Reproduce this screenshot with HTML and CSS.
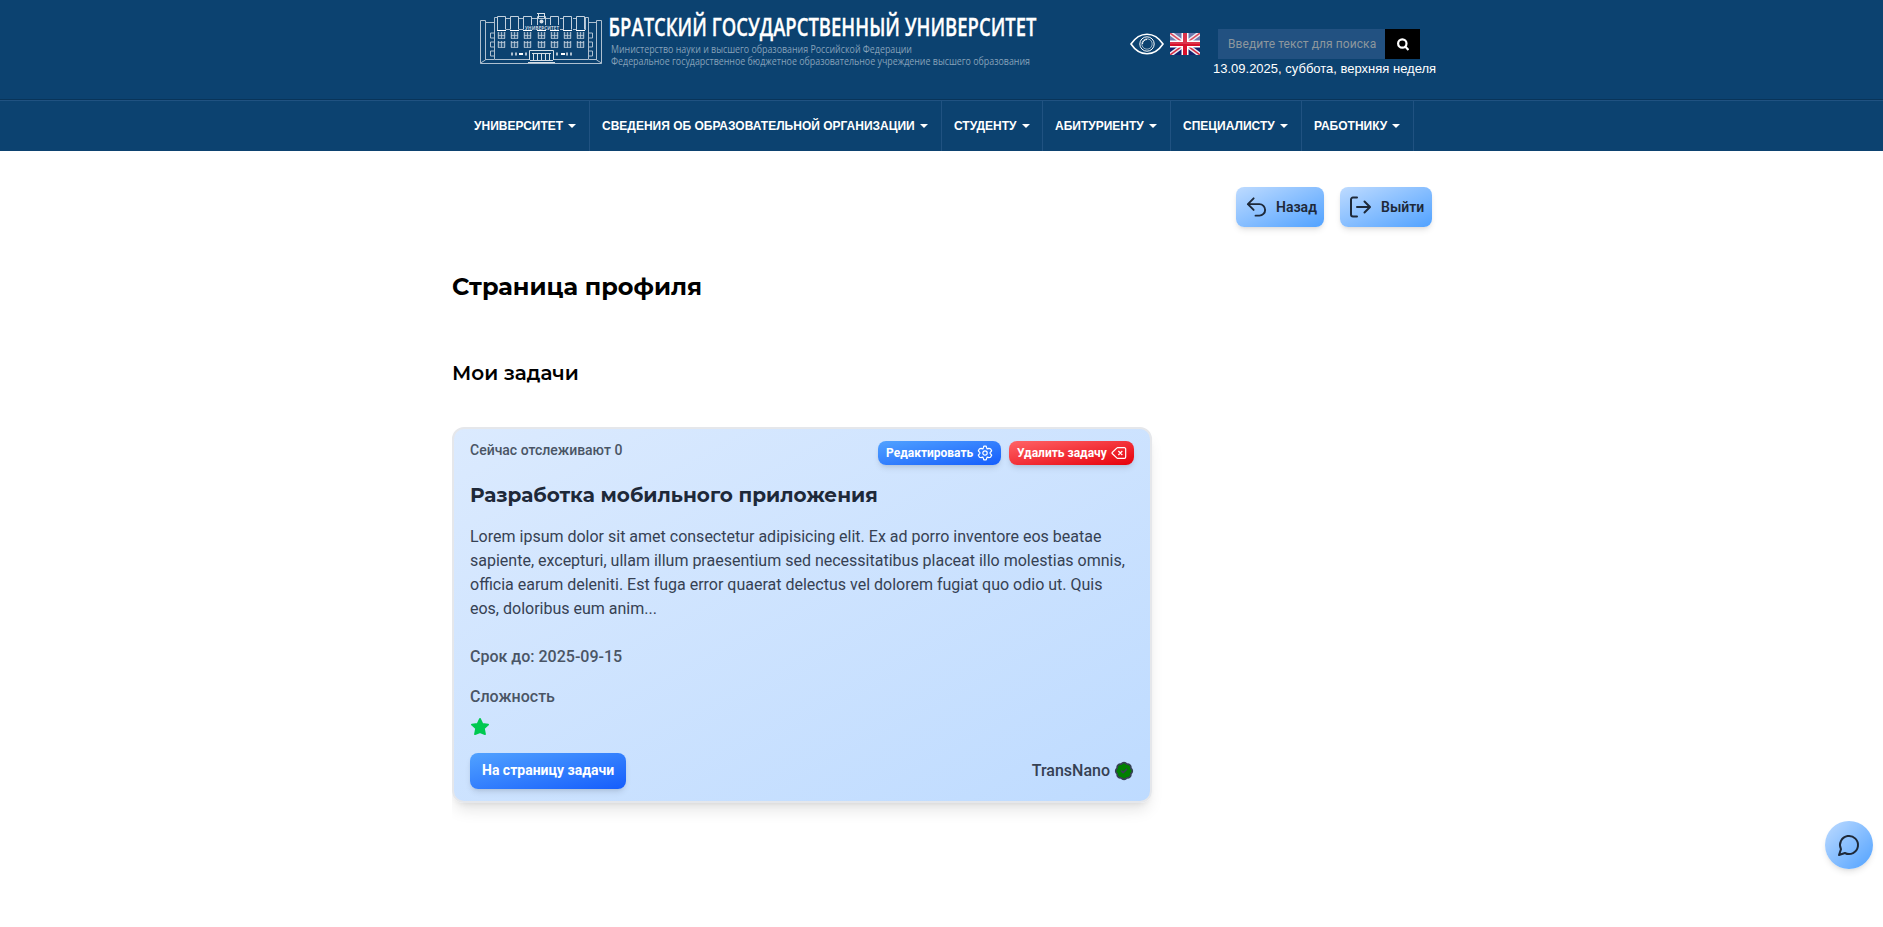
FILE: index.html
```html
<!DOCTYPE html>
<html lang="ru">
<head>
<meta charset="utf-8">
<title>Страница профиля</title>
<link rel="stylesheet" href="styles.css">
</head>
<body>
<header class="header">
  <div class="top">
    <svg class="logo" width="570" height="70" viewBox="0 0 570 70">
      <defs>
        <g id="bay" fill="none" stroke="#c3d0dd">
          <path d="M.5 14.5V1.5H8.5V14.500" />
          <path d="M0 15.500H9" stroke="#fff"/>
          <path d="M1.500 17V23.500M4.500 17V23.500M7.500 17V23.500M1.500 26V32.500M4.500 26V32.500M7.500 26V32.500" stroke-width="1.500" opacity=".8"/>
          <path d="M1 20.500H8M1 23.500H8M1 27.500H8M1 32.500H8" opacity=".7"/>
        </g>
      </defs>
      <g fill="none" stroke="#afc0d0">
        <path d="M28.500 20.500H33.500V22.500H42.500V17.500H45M28.500 20.500V63.500H149.500V20.500H144.500V22.500H136.500V17.500H134M33.500 22V60L28.500 63M144.500 22V60L149.500 63M42.500 22V59.500H34M136.500 22V59.500H144M43 59.500H77M102 59.500H136M45.500 17V30M133.500 17V30"/>
        <path d="M38.500 33H42M38.500 33V38H42M38.500 42V47H42M38.500 42H42M38.500 51V56H42M38.500 51H42M140.500 33H137M140.500 33V38H137M140.500 42V47H137M140.500 42H137M140.500 51V56H137M140.500 51H137" />
        <path d="M77.500 60V50.500H101.500V60M80 53.500H99M81.500 54V60M85.500 54V60M89.500 54V60M93.500 54V60M97.500 54V60M78 60.500H101M76 62.500H103" stroke="#d6dfe7"/>
        <path d="M54 18.500H58M67 18.500H71M80 18.500H98M108 18.500H112M121 18.500H125M54 29.500H58M67 29.500H71M108 29.500H112M121 29.500H125" />
        <path d="M59 54H61M63 54H65M73 54H75M104 54H106M114 54H116M118 54H120" stroke-width="3"/>
        <path d="M67 54H71M109 54H113" stroke="#fff" stroke-width="2"/>
      </g>
      <use href="#bay" x="45" y="15"/><use href="#bay" x="58" y="15"/><use href="#bay" x="71" y="15"/><use href="#bay" x="85" y="15"/><use href="#bay" x="98" y="15"/><use href="#bay" x="111" y="15"/><use href="#bay" x="124" y="15"/>
      <path d="M85 13.500H93M86.500 14V18M92.500 14V18" fill="none" stroke="#d8e1e9"/>
      <circle cx="89.500" cy="21.500" r="2" fill="#d8e1e9"/>
      <rect x="72" y="25" width="36" height="5" fill="#0c4270"/>
      <text class="sign" x="73" y="29.500" textLength="34">УНИВЕРСИТЕТ</text>
      <text class="logo-title" x="156.500" y="36" textLength="428" lengthAdjust="spacingAndGlyphs">БРАТСКИЙ ГОСУДАРСТВЕННЫЙ УНИВЕРСИТЕТ</text>
      <text class="logo-sub" x="159" y="53" textLength="301" lengthAdjust="spacingAndGlyphs">Министерство науки и высшего образования Российской Федерации</text>
      <text class="logo-sub" x="159" y="65" textLength="419" lengthAdjust="spacingAndGlyphs">Федеральное государственное бюджетное образовательное учреждение высшего образования</text>
    </svg>
    <div class="tools">
      <svg class="eye" width="34" height="22" viewBox="0 0 34 22" fill="none" stroke="#fff">
        <path d="M1 11C5 5 10 1.200 17 1.200S29 5 33 11C29 17 24 20.800 17 20.800S5 17 1 11Z" stroke-width="1.600"/>
        <circle cx="17" cy="11" r="7.200"/><path d="M12.500 11A4.500 4.500 0 0 1 17 6.500"/><circle cx="17" cy="11" r="5.200" stroke-width=".6"/>
      </svg>
      <svg class="flag" width="30" height="22" viewBox="0 0 30 22">
        <rect width="30" height="22" fill="#12206c"/>
        <rect width="30" height="11" fill="#5361a0"/>
        <path d="M0 0L30 22M30 0L0 22" stroke="#e9ebf3" stroke-width="4.500"/>
        <path d="M0 0L30 22M30 0L0 22" stroke="#d72b42" stroke-width="1.500"/>
        <path d="M15 0V22M0 11H30" stroke="#fff" stroke-width="7"/>
        <path d="M15 0V22M0 11H30" stroke="#d8102b" stroke-width="4"/>
        <path d="M0 0H30V11H0Z" fill="#fff" opacity=".15"/>
      </svg>
      <div class="search-area">
        <div class="search">
          <div class="field"><span>Введите текст для поиска</span></div>
          <div class="find"><svg width="12" height="13" viewBox="0 0 12 13" fill="none" stroke="#fff" stroke-width="2.200"><circle cx="5.300" cy="5.500" r="4.200"/><path d="M8.500 8.700L11.500 12"/></svg></div>
        </div>
        <div class="date">13.09.2025, суббота, верхняя неделя</div>
      </div>
    </div>
  </div>
  <nav class="nav">
    <a class="n1">УНИВЕРСИТЕТ<i></i></a><a class="n2">СВЕДЕНИЯ ОБ ОБРАЗОВАТЕЛЬНОЙ ОРГАНИЗАЦИИ<i></i></a><a class="n3">СТУДЕНТУ<i></i></a><a class="n4">АБИТУРИЕНТУ<i></i></a><a class="n5">СПЕЦИАЛИСТУ<i></i></a><a class="n6">РАБОТНИКУ<i></i></a>
  </nav>
</header>
<main class="main">
  <div class="actions">
    <button class="btn-light back"><svg width="24" height="24" viewBox="0 0 24 24"><path d="M9 15L3 9L9 3M3 9H15A6 6 0 0 1 15 21H11"/></svg>Назад</button>
    <button class="btn-light exit"><svg width="24" height="24" viewBox="0 0 24 24"><path d="M9 2.500H5A2 2 0 0 0 3 4.500V19.500A2 2 0 0 0 5 21.500H9M9 12H21.500M16.500 6.500L22 12L16.500 17.500"/></svg>Выйти</button>
  </div>
  <h1 class="page-title">Страница профиля</h1>
  <h2 class="section-title">Мои задачи</h2>
  <article class="card">
    <div class="card-top">
      <span class="watch">Сейчас отслеживают 0</span>
      <div class="card-buttons">
        <button class="small edit">Редактировать<svg width="16" height="16" viewBox="0 0 24 24"><path d="M9.594 3.940L10.200 1.800H13.800L14.406 3.940L15.300 5.900L17.900 5.100L20.300 5.600L22 8.800L20.500 10.500L19.300 12L20.500 13.500L22 15.200L20.300 18.400L17.900 18.900L15.300 18.100L14.400 20.100L13.800 22.200H10.200L9.600 20.100L8.700 18.100L6.100 18.900L3.700 18.400L2 15.200L3.500 13.500L4.700 12L3.500 10.500L2 8.800L3.700 5.600L6.100 5.100L8.700 5.900Z"/><circle cx="12" cy="12" r="3.300"/></svg></button>
        <button class="small delete">Удалить задачу<svg width="16" height="16" viewBox="0 0 24 24"><path d="M10 4A2 2 0 0 0 8.600 4.600L1.800 11.200A1 1 0 0 0 1.800 12.700L8.600 19.400A2 2 0 0 0 10 20H20A2 2 0 0 0 22 18V6A2 2 0 0 0 20 4ZM11 9L17 15M17 9L11 15"/></svg></button>
      </div>
    </div>
    <h3 class="card-title">Разработка мобильного приложения</h3>
    <p class="description">Lorem ipsum dolor sit amet consectetur adipisicing elit. Ex ad porro inventore eos beatae sapiente, excepturi, ullam illum praesentium sed necessitatibus placeat illo molestias omnis, officia earum deleniti. Est fuga error quaerat delectus vel dolorem fugiat quo odio ut. Quis eos, doloribus eum anim...</p>
    <p class="meta">Срок до: 2025-09-15</p>
    <p class="meta difficulty">Сложность</p>
    <svg class="star" width="20" height="20" viewBox="0 0 20 20" fill="#00c950" stroke="#00c950" stroke-width="1.800" stroke-linejoin="round"><path d="M10 1.900L12.400 6.900L18.100 7.600L13.900 11.400L15 17.100L10 15.100L5 17.100L6.100 11.400L1.900 7.600L7.600 6.900Z"/></svg>
    <div class="card-bottom">
      <button class="open">На страницу задачи</button>
      <div class="author">TransNano<svg width="20" height="20" viewBox="0 0 24 24" fill="green" stroke="#364153" stroke-width="2" stroke-linecap="round" stroke-linejoin="round"><path d="M3.850 8.620a4 4 0 0 1 4.780-4.770 4 4 0 0 1 6.740 0 4 4 0 0 1 4.780 4.780 4 4 0 0 1 0 6.740 4 4 0 0 1-4.770 4.780 4 4 0 0 1-6.750 0 4 4 0 0 1-4.780-4.770 4 4 0 0 1 0-6.760Z"/><path d="m9 12 2 2 4-4" fill="none"/></svg></div>
    </div>
  </article>
</main>
<button class="chat"><svg width="24" height="24" viewBox="0 0 24 24"><path d="M7.900 20A9 9 0 1 0 4 16.100L2 22Z"/></svg></button>
</body>
</html>
```
FILE: styles.css
```css
* { box-sizing: border-box; }
body { margin: 0; background: #fff; font-family: Roboto, sans-serif; font-size: 16px; line-height: 24px; min-height: 927px; }
h1, h2, h3, p { margin: 0; }
button { border: 0; margin: 0; font-family: inherit; display: flex; align-items: center; }
svg { display: block; flex-shrink: 0; }

.header { background: #0c4270; height: 151px; }
.top { height: 101px; padding-left: 452px; display: flex; border-bottom: 1px solid #205281; box-shadow: inset 0 -1px #093459; }
.logo { overflow: visible; }
.logo-title { font: 600 25.500px "Open Sans", sans-serif; fill: #fff; stroke: #fff; stroke-width: .3px; }
.logo-sub { font: 500 10px "Open Sans", sans-serif; fill: #86a1b9; }
.sign { font: 700 4.500px "Open Sans", sans-serif; fill: #c5d2de; }
.tools { display: flex; align-items: flex-start; margin-left: 108px; width: 320px; }
.eye { margin-top: 33px; }
.flag { margin: 33px 0 0 6px; }
.search-area { margin: 29px 0 0 13px; width: 230px; }
.search { display: flex; margin-left: 5px; height: 30px; width: 202px; }
.field { width: 167px; background: #225181; color: #8d979d; font-size: 12px; line-height: 30px; padding-left: 10px; }
.field span { display: block; width: 147px; white-space: nowrap; letter-spacing: .08px; }
.find { width: 35px; background: #000; display: flex; align-items: center; justify-content: center; }
.date { font: 13px/19px "Liberation Sans", Arial, sans-serif; color: #fff; white-space: nowrap; }

.nav { display: flex; height: 50px; padding-left: 462px; }
.nav a { border-right: 1px solid #205281; padding: 0 0 0 12px; display: flex; align-items: center; color: #fff; font: 700 12px "Liberation Sans", Arial, sans-serif; white-space: nowrap; }
.nav i { border: 4px solid transparent; border-top-color: #fff; border-bottom: 0; margin-left: 5px; }
.n1 { width: 128px; } .n2 { width: 352px; } .n3 { width: 101px; }
.n4 { width: 128px; } .n5 { width: 131px; } .n6 { width: 112px; }

.main { width: 990px; margin-left: 452px; padding-bottom: 50px; overflow: hidden; }
.actions { display: flex; justify-content: flex-end; gap: 16px; padding: 36px 10px 0 0; }
.btn-light { height: 40px; border-radius: 8px; padding: 0 0 1px 8px; gap: 8px; color: #1e2939; font-size: 14px; font-weight: 600; background: linear-gradient(to bottom right, #bedbff, #51a2ff); box-shadow: 0 4px 6px -1px #0000001a, 0 2px 4px -2px #0000001a; }
.back { width: 88px; } .exit { width: 92px; gap: 9px; }
.btn-light svg, .chat svg { fill: none; stroke: #1e2939; stroke-width: 2; stroke-linecap: round; stroke-linejoin: round; }
.back svg { width: 23px; }
.back { padding-left: 9px; }
.page-title { font: 700 24px/32px Montserrat, "Open Sans", sans-serif; margin-top: 44px; }
.section-title { font: 600 20px/28px Montserrat, "Open Sans", sans-serif; margin-top: 56px; }
.card { width: 700px; height: 376px; margin-top: 40px; padding: 12px 16px 0; border: 2px solid #e5e7eb; border-radius: 12px; background: linear-gradient(to bottom right, #dbeafe, #bedbff); box-shadow: 0 10px 15px -3px #0000001a, 0 4px 6px -4px #0000001a; }
.card-top { display: flex; justify-content: space-between; height: 28px; }
.watch { font-size: 14px; line-height: 18px; font-weight: 500; color: #4a5565; }
.card-buttons { display: flex; gap: 8px; }
.small { height: 24px; border-radius: 8px; padding: 0 0 0 8px; gap: 4px; color: #fff; font-size: 12px; font-weight: 700; box-shadow: 0 4px 6px -1px #0000001a, 0 2px 4px -2px #0000001a; }
.small svg { fill: none; stroke: #fff; stroke-width: 1.800; stroke-linejoin: round; }
.edit { width: 123px; background: linear-gradient(to bottom right, #51a2ff, #155dfc); }
.delete { width: 125px; background: linear-gradient(to bottom right, #ff6467, #e7000b); }
.card-title { font: 700 20px/28px Montserrat, "Open Sans", sans-serif; color: #1e2939; margin-top: 12px; }
.description { color: #364153; margin-top: 16px; }
.meta { color: #4a5565; font-weight: 500; margin-top: 24px; }
.difficulty { margin-top: 16px; }
.star { margin-top: 8px; }
.card-bottom { display: flex; justify-content: space-between; align-items: center; margin-top: 16px; }
.open { height: 36px; width: 156px; padding: 0 12px 2px; border-radius: 8px; color: #fff; font-size: 14px; font-weight: 700; white-space: nowrap; background: linear-gradient(to bottom right, #51a2ff, #155dfc); box-shadow: 0 4px 6px -1px #0000001a, 0 2px 4px -2px #0000001a; }
.author { display: flex; align-items: center; gap: 4px; color: #364153; font-weight: 500; }
.chat { position: fixed; right: 10px; bottom: 58px; width: 48px; height: 48px; padding: 0; justify-content: center; border-radius: 50%; background: linear-gradient(to bottom right, #bedbff, #51a2ff); box-shadow: 0 4px 6px -1px #0000001a, 0 2px 4px -2px #0000001a; }
```
